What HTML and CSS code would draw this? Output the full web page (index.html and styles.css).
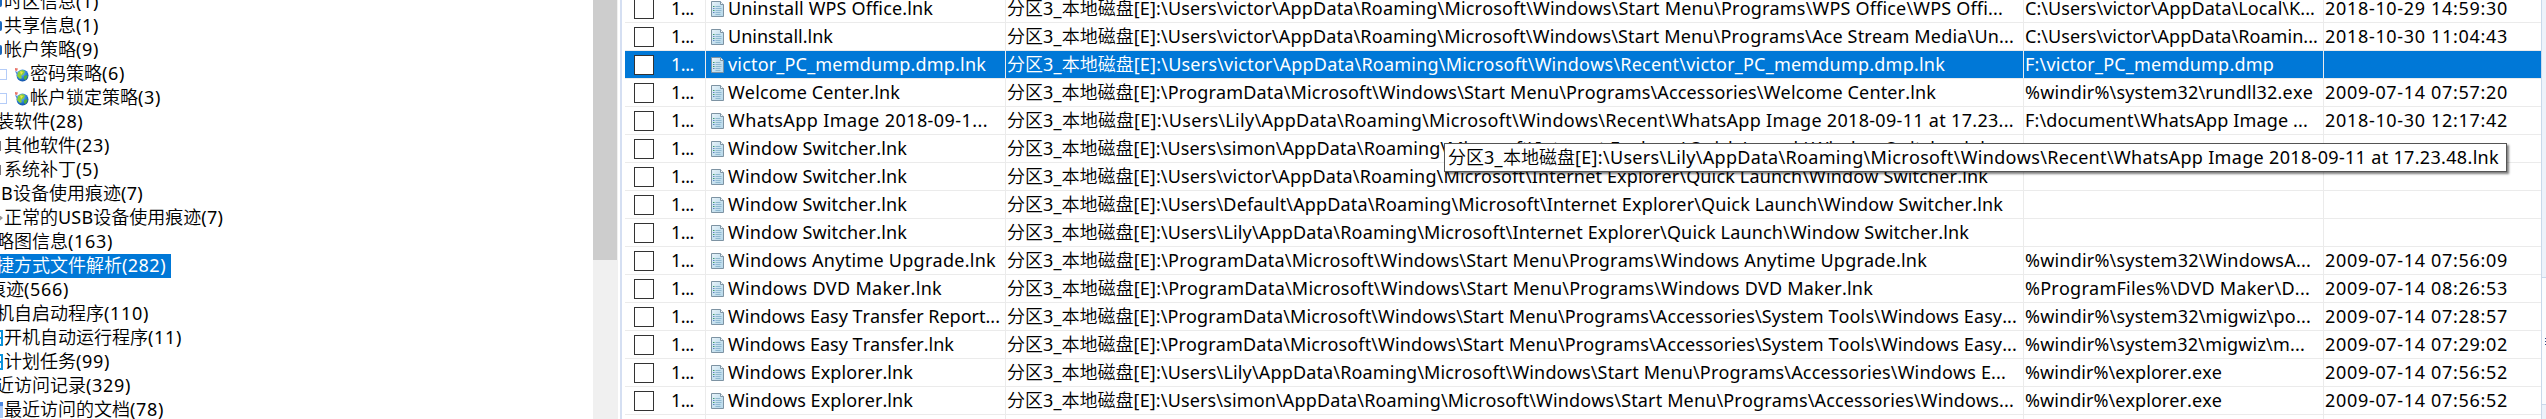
FILE: index.html
```html
<!DOCTYPE html>
<html lang="zh">
<head>
<meta charset="utf-8">
<title>快捷方式文件解析</title>
<link rel="stylesheet" href="styles.css">
</head>
<body>
<svg class="defs" width="0" height="0">
  <defs>
    <linearGradient id="paper" x1="0" y1="0" x2="1" y2="1"><stop offset="0" stop-color="#e9f4fa"/><stop offset=".5" stop-color="#c9e2ef"/><stop offset="1" stop-color="#b7d8ea"/></linearGradient>
    <radialGradient id="sea" cx=".4" cy=".3" r=".8"><stop offset="0" stop-color="#7fc4f5"/><stop offset=".6" stop-color="#2277d0"/><stop offset="1" stop-color="#0b3f94"/></radialGradient>
    <symbol id="file" viewBox="0 0 13 16">
      <path d="M.5.5h9l3 3v12H.5z" fill="url(#paper)" stroke="#7d93a3"/>
      <path d="M9.5.5v3h3" fill="#f4fafd" stroke="#7d93a3"/>
      <path d="M4.5 5.5h5M4.5 7.5h6M4.5 9.5h6M4.5 11.5h5M4.5 13.5h5" stroke="#8fb8d0" fill="none"/>
      <path d="M2 5.5h1.5M2 9.5h1.5" stroke="#3c9a6a"/><path d="M2 7.5h1.5M2 11.5h1.5" stroke="#5b84c4"/>
    </symbol>
    <symbol id="globe" viewBox="0 0 15 15">
      <circle cx="8.5" cy="8.5" r="6" fill="url(#sea)"/>
      <path d="M4 5l4-2 3 1-1 3-3 2 1 2-2 1-3-3z" fill="#8ccf3a"/>
      <path d="M10 9l3-1 .5 2-2 3-1.5-1z" fill="#4fae3c"/>
      <path d="M6 4l3 1-2 3z" fill="#f2e24a"/>
      <path d="M1 1l3 .5L3 4 1 3.500z" fill="#e8756a"/><path d="M1 4l2.500 1L3 8z" fill="#4e8ad8"/>
    </symbol>
  </defs>
</svg>
<div class="app">
  <div class="tree" id="tree"></div>
  <div class="scroll"><div class="thumb"></div></div>
  <div class="split"></div>
  <div class="grid" id="grid"></div>
  <div class="side"><div class="tab"></div><div class="tab active"><i></i><i></i><i></i></div><div class="tab"></div></div>
</div>
<div class="tip" id="tip"></div>
<script src="app.js"></script>
</body>
</html>
```
FILE: styles.css
```css
* { box-sizing: border-box; }
body { margin: 0; width: 2546px; height: 419px; overflow: hidden; background: #fff; color: #000;
  font: 18px/24px "Noto Sans", "Noto Sans CJK SC", sans-serif; font-kerning: none; font-variant-ligatures: none; }
.defs { display: block; width: 0; height: 0; }
.app { display: flex; width: 2546px; height: 419px; overflow: hidden; }
.cjk { font-family: "Noto Sans CJK SC", sans-serif; font-size: 18px; font-weight: 350; line-height: 1; letter-spacing: 0; }
.fit { white-space: pre; flex: none; }

.tree { width: 593px; height: 419px; overflow: hidden; }
.node { display: flex; align-items: center; height: 24px; }
.node:first-child { margin-top: -10px; }
.node .fit { height: 24px; line-height: 23px; }
.node.sel .fit { background: #0078d7; color: #fff; }
.sel .fit { color: #fff; }
.node.sel .fit { padding-right: 5px; }
.edge { flex: none; width: 3px; margin-right: 1px; height: 15px; }
.edge.globe { width: 2px; height: 10px; margin-right: 2px; background: #1d68bd; border-radius: 0 3px 3px 0; }
.edge.gray { width: 1px; height: 10px; margin-right: 3px; background: #77747c; }
.edge.cyan { height: 16px; border: 2px solid #0b94dc; border-left: 0; background: linear-gradient(#fff 45%, #0b94dc 45% 60%, #fff 60%); }
.edge.pale { height: 16px; background: linear-gradient(#4d86e0 25%, #a8c8f8 25%); }
.edge.plug { height: 5px; background: #999; clip-path: polygon(0 0, 100% 50%, 0 100%); }
.box { flex: none; width: 7px; height: 11px; border: 1px solid #b4ccf8; border-left: 0; margin-right: 7px; }
.glob { flex: none; width: 15px; height: 15px; margin-right: 1px; }

.scroll { flex: none; width: 25px; background: #f0f0f0; }
.thumb { width: 24px; height: 260px; background: #cdcdcd; }
.split { flex: none; width: 7px; border: solid #fff; border-width: 0 3px 0 2px; background: #d5dff2; }

.grid { flex: none; width: 1916px; height: 419px; overflow: hidden; }
.row { display: grid; grid-template-columns: 81px 300px 1018px 300px 217px; height: 28px; border-bottom: 1px solid #ebebeb; }
.row:first-child { margin-top: -5px; }
.cell { display: flex; align-items: center; border-right: 1px solid #ebebeb; overflow: hidden; padding-left: 1px; }
.cell:last-child { border-right: 0; }
.cell .fit { height: 27px; line-height: 27px; }
.cell.mark { padding-left: 9px; }
.cell.name { padding-left: 5px; }
.row.sel .cell { background: #0078d7; }
.check { flex: none; width: 20px; height: 20px; margin-right: 17px; border: 1px solid #333; background: #fff; }
.file { flex: none; width: 13px; height: 16px; margin-right: 4px; }

.side { flex: none; width: 5px; display: flex; flex-direction: column; }
.tab { background: #edf2fa; border-left: 1px solid #c9d8ea; }
.tab:last-child { flex: 1; }
.tab:first-child { height: 277px; }
.tab.active { height: 128px; background: #fbfcfe; border-top: 1px solid #c9d8ea; border-bottom: 1px solid #c9d8ea; padding: 60px 0 0 3px; }
.tab i { display: block; height: 1px; margin-bottom: 2px; background: #34558b; }

.tip { position: absolute; left: 1444px; top: 143px; width: 1063px; height: 29px; padding-left: 3px;
  border: 1px solid #555; background: #fff; box-shadow: 2px 2px 2px rgba(0,0,0,.5); }
.tip .fit { line-height: 26px; height: 26px; display: block; width: max-content; }
```
FILE: app.js
```js
const DISK = '分区3_本地磁盘[E]:\\';
const START = 'Microsoft\\Windows\\Start Menu\\Programs\\';
const QUICK = 'Microsoft\\Internet Explorer\\Quick Launch\\Window Switcher.lnk';
const user = n => DISK + 'Users\\' + n + '\\AppData\\Roaming\\';
const common = DISK + 'ProgramData\\' + START;

// Each text is paired with the width in pixels it is set to.
const rows = [
  ['Uninstall WPS Office.lnk', 205, user('victor') + START + 'WPS Office\\WPS Offi...', 996, 'C:\\Users\\victor\\AppData\\Local\\K...', 290, '2018-10-29 14:59:30'],
  ['Uninstall.lnk', 105, user('victor') + START + 'Ace Stream Media\\Un...', 1007, 'C:\\Users\\victor\\AppData\\Roamin...', 293, '2018-10-30 11:04:43'],
  ['victor_PC_memdump.dmp.lnk', 258, user('victor') + 'Microsoft\\Windows\\Recent\\victor_PC_memdump.dmp.lnk', 938, 'F:\\victor_PC_memdump.dmp', 249, ''],
  ['Welcome Center.lnk', 172, common + 'Accessories\\Welcome Center.lnk', 929, '%windir%\\system32\\rundll32.exe', 288, '2009-07-14 07:57:20'],
  ['WhatsApp Image 2018-09-1...', 260, user('Lily') + 'Microsoft\\Windows\\Recent\\WhatsApp Image 2018-09-11 at 17.23...', 1007, 'F:\\document\\WhatsApp Image ...', 283, '2018-10-30 12:17:42'],
  ['Window Switcher.lnk', 179, user('simon') + QUICK, 983, '', 0, ''],
  ['Window Switcher.lnk', 179, user('victor') + QUICK, 981, '', 0, ''],
  ['Window Switcher.lnk', 179, user('Default') + QUICK, 996, '', 0, ''],
  ['Window Switcher.lnk', 179, user('Lily') + QUICK, 962, '', 0, ''],
  ['Windows Anytime Upgrade.lnk', 268, common + 'Windows Anytime Upgrade.lnk', 920, '%windir%\\system32\\WindowsA...', 286, '2009-07-14 07:56:09'],
  ['Windows DVD Maker.lnk', 214, common + 'Windows DVD Maker.lnk', 866, '%ProgramFiles%\\DVD Maker\\D...', 285, '2009-07-14 08:26:53'],
  ['Windows Easy Transfer Report...', 272, common + 'Accessories\\System Tools\\Windows Easy...', 1010, '%windir%\\system32\\migwiz\\po...', 286, '2009-07-14 07:28:57'],
  ['Windows Easy Transfer.lnk', 226, common + 'Accessories\\System Tools\\Windows Easy...', 1010, '%windir%\\system32\\migwiz\\m...', 280, '2009-07-14 07:29:02'],
  ['Windows Explorer.lnk', 185, user('Lily') + START + 'Accessories\\Windows E...', 999, '%windir%\\explorer.exe', 197, '2009-07-14 07:56:52'],
  ['Windows Explorer.lnk', 185, user('simon') + START + 'Accessories\\Windows...', 1007, '%windir%\\explorer.exe', 197, '2009-07-14 07:56:52'],
  ['', 0, '', 0, '', 0, '']
];

// text, width, left offset, leading icon
const nodes = [
  ['时区信息(1)', 95, 0, 'globe'], ['共享信息(1)', 95, 0, 'globe'], ['帐户策略(9)', 95, 0, 'globe'],
  ['密码策略(6)', 95, 0, 'child'], ['帐户锁定策略(3)', 131, 0, 'child'],
  ['装软件(28)', 87, -4, ''], ['其他软件(23)', 106, 0, 'gray'], ['系统补丁(5)', 95, 0, 'gray'],
  ['B设备使用痕迹(7)', 142, 1, ''], ['正常的USB设备使用痕迹(7)', 219, 0, 'plug'],
  ['略图信息(163)', 117, -4, ''], ['捷方式文件解析(282)', 170, -4, ''],
  ['痕迹(566)', 81, -12, ''], ['机自启动程序(110)', 153, -4, ''],
  ['开机自动运行程序(11)', 178, 0, 'cyan'], ['计划任务(99)', 106, 0, 'cyan'],
  ['近访问记录(329)', 135, -4, ''], ['最近访问的文档(78)', 160, 0, 'pale']
];

function text(s, w) {
  if (!s) return '';
  const body = s.replace(/[\u4e00-\u9fff]+/g, m => `<span class="cjk">${m}</span>`);
  return `<span class="fit" data-w="${w}">${body}</span>`;
}
const lead = k => k === 'child'
  ? '<i class="box"></i><svg class="glob"><use href="#globe"/></svg>'
  : k ? `<i class="edge ${k}"></i>` : '';
const mark = n => n
  ? `<i class="check"></i>${text('1...', 23)}` : '';
const file = n => n
  ? `<svg class="file"><use href="#file"/></svg>${text(...n)}` : '';

document.getElementById('tree').innerHTML = nodes.map(([s, w, x, k], i) =>
  `<div class="node${i === 11 ? ' sel' : ''}" style="margin-left:${x}px">${lead(k)}${text(s, w)}</div>`).join('');

document.getElementById('grid').innerHTML = rows.map(([n, nw, p, pw, t, tw, d], i) =>
  `<div class="row${i === 2 ? ' sel' : ''}"><div class="cell mark">${mark(n)}</div>` +
  `<div class="cell name">${file(n && [n, nw])}</div>` +
  `<div class="cell">${text(p, pw)}</div><div class="cell">${text(t, tw)}</div><div class="cell">${text(d, 183)}</div></div>`).join('');

document.getElementById('tip').innerHTML =
  text(user('Lily') + 'Microsoft\\Windows\\Recent\\WhatsApp Image 2018-09-11 at 17.23.48.lnk', 1051);

// Spread the Latin letters so that each text takes its set width.
for (const el of document.querySelectorAll('.fit')) {
  const pad = parseFloat(getComputedStyle(el).paddingRight);
  const latin = el.textContent.replace(/[\u4e00-\u9fff]/g, '').length;
  const natural = el.getBoundingClientRect().width - pad;
  el.style.letterSpacing = ((el.dataset.w - natural) / latin) + 'px';
}
```
